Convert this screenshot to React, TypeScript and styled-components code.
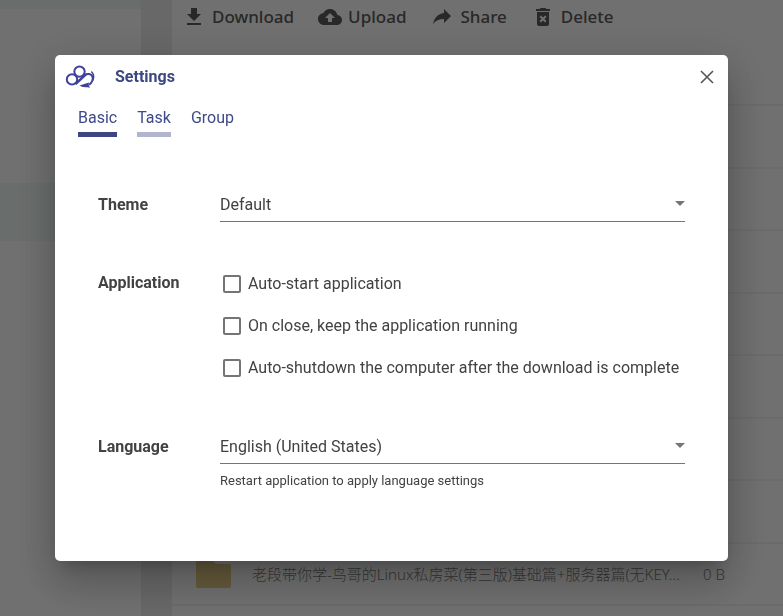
import React from "react";
import styled, { createGlobalStyle } from "styled-components";

const GlobalStyle = createGlobalStyle`
  *, *::before, *::after { box-sizing: border-box; }
  html, body, #root { height: 100%; }
  body {
    margin: 0;
    overflow: hidden;
    background: #fff;
    color: #424242;
    font: 400 16px/20px Roboto, "Noto Sans CJK SC", sans-serif;
  }
  button, select, input { font: inherit; color: inherit; margin: 0; }
`;

const Page = styled.div`
  display: flex;
  height: 100vh;
  overflow: hidden;
`;

const Sidebar = styled.nav`
  flex: 0 0 172px;
  border-right: 31px solid #ececec;
`;

const SidebarItem = styled.div<{ $active?: boolean; $short?: boolean }>`
  height: ${(p) => (p.$short ? 9 : 58)}px;
  background: ${(p) => (p.$active ? "#f0f9f6" : "transparent")};
`;

const Files = styled.main`
  flex: 1;
  min-width: 0;
`;

const Toolbar = styled.div`
  display: flex;
  align-items: center;
  gap: 24px;
  height: 44px;
  padding: 0 10px 10px;
`;

const ToolButton = styled.button`
  display: flex;
  align-items: center;
  gap: 6px;
  padding: 0;
  border: 0;
  background: none;
  color: #5c5c5c;
  font: 500 17px/24px "Noto Sans", sans-serif;

  svg { width: 24px; height: 24px; fill: currentColor; }
`;

const FileList = styled.ul`
  margin: 0;
  padding: 0;
  list-style: none;
`;

const FileRow = styled.li`
  display: grid;
  grid-template-columns: 36px minmax(0, 1fr) 40px;
  align-items: center;
  column-gap: 20px;
  height: 62px;
  padding: 0 40px 0 24px;
  border-bottom: 2px solid #f4f4f4;
  color: #7c7c7c;
  font: 300 15px/20px "Noto Sans", "Noto Sans CJK SC", sans-serif;

  &:nth-child(even) { height: 63px; }
  svg { width: 36px; height: 32px; fill: #e6cd88; }
`;

const FileName = styled.span`
  overflow: hidden;
  white-space: nowrap;
  text-overflow: ellipsis;
`;

const Backdrop = styled.div`
  position: fixed;
  inset: 0;
  display: flex;
  padding: 55px;
  background: rgba(0, 0, 0, 0.56);
`;

const Dialog = styled.section`
  flex: 1;
  min-width: 0;
  border-radius: 5px;
  background: #fff;
  box-shadow: 0 11px 15px -7px rgba(0, 0, 0, 0.2),
    0 24px 38px 3px rgba(0, 0, 0, 0.14), 0 9px 46px 8px rgba(0, 0, 0, 0.12);
`;

const DialogHeader = styled.header`
  display: flex;
  align-items: center;
  gap: 20px;
  height: 44px;
  padding: 0 10px;
`;

const Logo = styled.svg`
  width: 30px;
  height: 24px;
  fill: none;
  stroke: #3e429c;
`;

const Title = styled.h1`
  flex: 1;
  margin: 0;
  color: #3c4680;
  font-size: 16px;
  font-weight: 700;
`;

const CloseButton = styled.button`
  display: grid;
  place-items: center;
  width: 22px;
  height: 22px;
  padding: 0;
  border: 0;
  background: none;
  color: #555;

  svg { width: 14px; height: 14px; fill: none; stroke: currentColor; stroke-width: 1.6; }
`;

const Tabs = styled.div`
  display: flex;
  gap: 20px;
  padding: 9px 23px 0;
`;

const Tab = styled.button<{ $line: string }>`
  padding: 0 0 4px;
  border: 0;
  border-bottom: 5px solid ${(p) => p.$line};
  background: none;
  color: #3f4a88;
`;

const Form = styled.form`
  display: grid;
  grid-template-columns: 122px minmax(0, 1fr);
  padding: 51px 43px 0;
`;

const RowLabel = styled.div`
  padding-top: 7px;
  font-weight: 700;
`;

const Field = styled.div`
  padding-bottom: 44px;
`;

const CheckGroup = styled.div`
  display: grid;
  gap: 22px;
  padding: 8px 0 52px 3px;
`;

const SelectBox = styled.div`
  position: relative;

  svg {
    position: absolute;
    right: 0;
    top: 13px;
    width: 10px;
    height: 5px;
    fill: #757575;
    pointer-events: none;
  }
`;

const Select = styled.select`
  display: block;
  appearance: none;
  width: 100%;
  height: 34px;
  padding: 0;
  border: 0;
  border-bottom: 1px solid #757575;
  border-radius: 0;
  background: transparent;
`;

const Hint = styled.p`
  margin: 7px 0 0;
  font-size: 13px;
`;

const CheckRow = styled.label`
  display: flex;
  align-items: center;
  gap: 7px;
  white-space: nowrap;
`;

const CheckBox = styled.input`
  appearance: none;
  flex: none;
  width: 18px;
  height: 18px;
  border: 2px solid #757575;
  border-radius: 2px;

  &:checked { background: #3c4680; border-color: #3c4680; }
`;

const tools = [
  { name: "Download", path: "M19 9h-4V3H9v6H5l7 7 7-7zM5 18v2h14v-2H5z" },
  {
    name: "Upload",
    path: "M19.35 10.04C18.67 6.59 15.64 4 12 4 9.11 4 6.6 5.64 5.35 8.04 2.34 8.36 0 10.91 0 14c0 3.31 2.69 6 6 6h13c2.76 0 5-2.24 5-5 0-2.64-2.05-4.78-4.65-4.96zM14 13v4h-4v-4H7l5-5 5 5h-3z",
  },
  { name: "Share", path: "M21 11L14 4v4C7 9 4 14 3 19c2.5-3.5 6-5.1 11-5.1V18l7-7z" },
  {
    name: "Delete",
    path: "M6 19c0 1.1.9 2 2 2h8c1.1 0 2-.9 2-2V7H6v12zm2.46-7.12l1.41-1.41L12 12.59l2.12-2.12 1.41 1.41L13.41 14l2.12 2.12-1.41 1.41L12 15.41l-2.12 2.12-1.41-1.41L10.59 14l-2.13-2.12zM15.5 4l-1-1h-5l-1 1H5v2h14V4z",
  },
];

const options = [
  "Auto-start application",
  "On close, keep the application running",
  "Auto-shutdown the computer after the download is complete",
];

function DropDown({ id, value }: { id: string; value: string }) {
  return (
    <SelectBox>
      <Select id={id} defaultValue={value}>
        <option>{value}</option>
      </Select>
      <svg viewBox="0 0 10 5" aria-hidden="true"><path d="M0 0h10L5 5z" /></svg>
    </SelectBox>
  );
}

export default function App() {
  return (
    <>
      <GlobalStyle />
      <Page>
        <Sidebar>
          <SidebarItem $short $active />
          <SidebarItem />
          <SidebarItem />
          <SidebarItem />
          <SidebarItem $active />
        </Sidebar>
        <Files>
          <Toolbar>
            {tools.map((t) => (
              <ToolButton key={t.name} type="button">
                <svg viewBox="0 0 24 24" aria-hidden="true"><path d={t.path} /></svg>
                {t.name}
              </ToolButton>
            ))}
          </Toolbar>
          <FileList>
            {Array.from({ length: 8 }, (_, i) => <FileRow key={i} />)}
            <FileRow>
              <svg viewBox="0 0 36 32" aria-hidden="true">
                <path d="M2 2h14l4 4h13a2 2 0 0 1 2 2v20a2 2 0 0 1-2 2H2a2 2 0 0 1-2-2V4a2 2 0 0 1 2-2z" />
              </svg>
              <FileName>老段带你学-鸟哥的Linux私房菜(第三版)基础篇+服务器篇(无KEY...</FileName>
              <span>0 B</span>
            </FileRow>
          </FileList>
        </Files>
      </Page>
      <Backdrop>
        <Dialog role="dialog" aria-modal="true" aria-labelledby="settings-title">
          <DialogHeader>
            <Logo viewBox="0 0 30 24" aria-hidden="true">
              <circle cx="14.5" cy="6.6" r="5.2" strokeWidth="2" />
              <circle cx="7" cy="14.4" r="5.2" strokeWidth="2" />
              <path d="M10.500 19L21 9.400" strokeWidth="2.4" />
              <path d="M19.500 10c3.200-2 7-1.200 8 1.800.8 3.200-.6 6-3.500 8" strokeWidth="2" />
              <path d="M26.400 6.500c2.400 2.600 2.800 6.500 1 9.500" strokeWidth="1.4" />
              <path d="M14.500 20.600l9.500-3.200-.4 2.400 1.400 3c-3.200-.4-7 .2-10.500-2.200z" fill="#3e429c" stroke="none" />
            </Logo>
            <Title id="settings-title">Settings</Title>
            <CloseButton type="button" aria-label="Close">
              <svg viewBox="0 0 14 14"><path d="M1 1l12 12M13 1L1 13" /></svg>
            </CloseButton>
          </DialogHeader>
          <Tabs role="tablist">
            <Tab role="tab" type="button" aria-selected="true" $line="#3c4680">Basic</Tab>
            <Tab role="tab" type="button" $line="#b1b5cd">Task</Tab>
            <Tab role="tab" type="button" $line="transparent">Group</Tab>
          </Tabs>
          <Form>
            <RowLabel as="label" htmlFor="theme">Theme</RowLabel>
            <Field>
              <DropDown id="theme" value="Default" />
            </Field>
            <RowLabel id="application">Application</RowLabel>
            <CheckGroup role="group" aria-labelledby="application">
              {options.map((o) => (
                <CheckRow key={o}>
                  <CheckBox type="checkbox" />
                  {o}
                </CheckRow>
              ))}
            </CheckGroup>
            <RowLabel as="label" htmlFor="language">Language</RowLabel>
            <Field>
              <DropDown id="language" value="English (United States)" />
              <Hint>Restart application to apply language settings</Hint>
            </Field>
          </Form>
        </Dialog>
      </Backdrop>
    </>
  );
}
